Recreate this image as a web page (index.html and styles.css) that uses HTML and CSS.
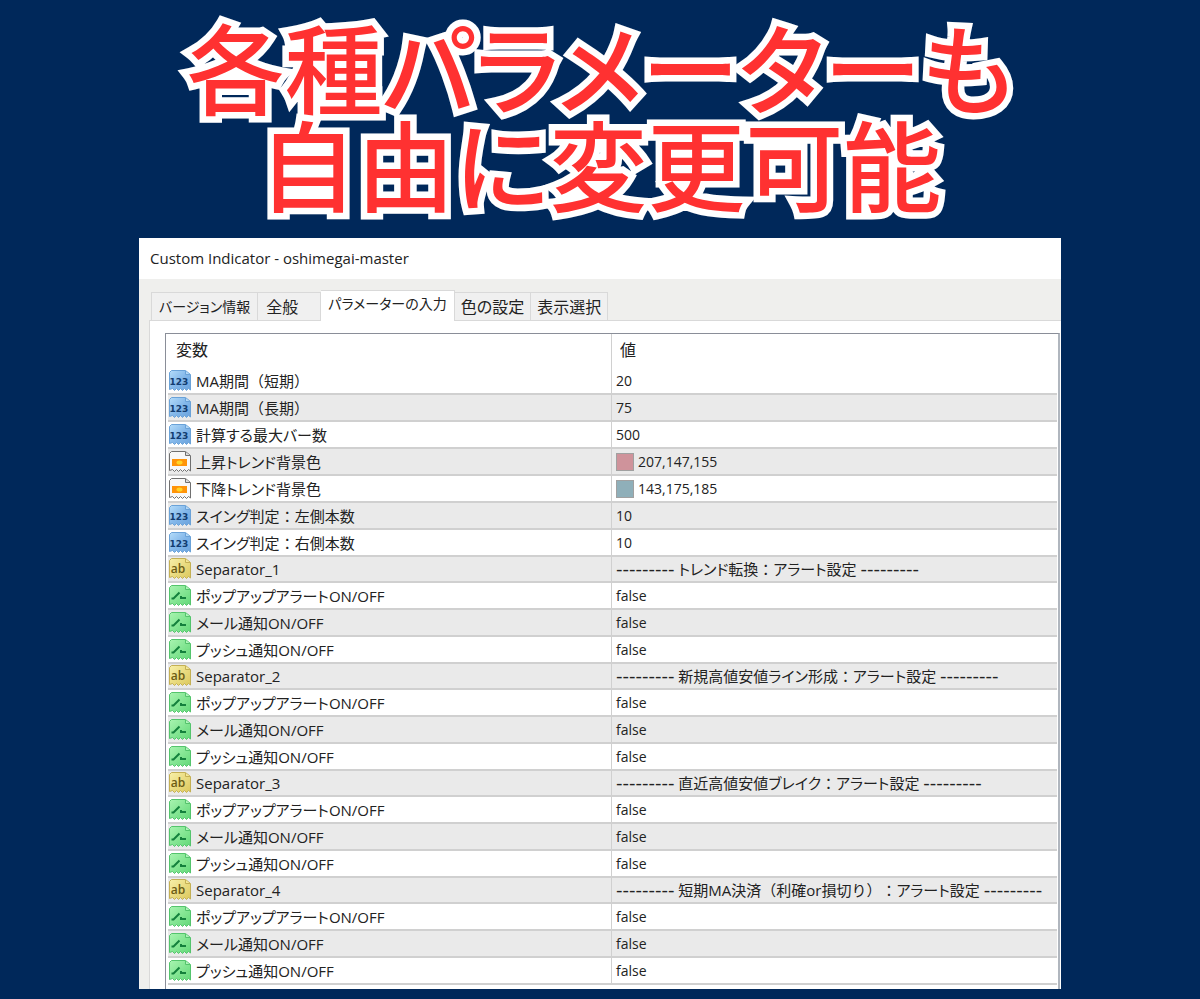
FILE: index.html
```html
<!DOCTYPE html>
<html lang="ja">
<head>
    <meta charset="UTF-8">
    <meta name="viewport" content="width=device-width, initial-scale=1.0">
    <title>各種パラメーターも自由に変更可能</title>
    <link rel="stylesheet" href="styles.css">
</head>
<body>

    <!-- Icon shapes used in the list -->
    <svg class="icon-defs" width="0" height="0" aria-hidden="true">
        <defs>
            <linearGradient id="blue" x1="0" y1="0" x2="1" y2="1">
                <stop offset="0" stop-color="#b4dcfa"/>
                <stop offset="0.5" stop-color="#84b8ea"/>
                <stop offset="1" stop-color="#6aa2dc"/>
            </linearGradient>
            <linearGradient id="yellow" x1="0" y1="0" x2="1" y2="1">
                <stop offset="0" stop-color="#f8f0a8"/>
                <stop offset="1" stop-color="#dcc85c"/>
            </linearGradient>
            <linearGradient id="green" x1="0" y1="0" x2="1" y2="1">
                <stop offset="0" stop-color="#a8f4b0"/>
                <stop offset="1" stop-color="#62d878"/>
            </linearGradient>
            <path id="sheet" d="M2.5 .5H16.5L21.5 4.5V20L19.5 18.5L17.5 20.5L15.5 18.5L13.5 20.5L11.5 18.5L9.5 20.5L7.5 18.5L5.5 20.5L3.5 18.5L.5 19.5V2.5Z"/>
            <symbol id="icon-int" viewBox="0 0 22 21">
                <use href="#sheet" fill="url(#blue)" stroke="#6aa2d8"/>
                <path d="M16.5 1V4.5H21" fill="#b4d8f6" stroke="#6aa2d8"/>
                <text x="10" y="15" text-anchor="middle" class="icon-num">123</text>
            </symbol>
            <symbol id="icon-color" viewBox="0 0 22 21">
                <use href="#sheet" fill="#f8f8f8" stroke="#707070"/>
                <path d="M16.5 1V4.5H21" fill="#ddd" stroke="#707070"/>
                <path d="M3 8H18V15H3Z" fill="#ff9408"/>
                <ellipse cx="10.5" cy="11.5" rx="3" ry="2" fill="#ffd428"/>
            </symbol>
            <symbol id="icon-str" viewBox="0 0 22 21">
                <use href="#sheet" fill="url(#yellow)" stroke="#c4b054"/>
                <path d="M16.5 1V4.5H21" fill="#f4e898" stroke="#c4b054"/>
                <text x="9" y="15" text-anchor="middle" class="icon-ab">ab</text>
            </symbol>
            <symbol id="icon-bool" viewBox="0 0 22 21">
                <use href="#sheet" fill="url(#green)" stroke="#54c46c"/>
                <path d="M16.5 1V4.5H21" fill="#b0f4ba" stroke="#54c46c"/>
                <path d="M2.5 13.5H4.5L10.5 7.5M12 11V13H17" fill="none" stroke="#14803c" stroke-width="2"/>
            </symbol>
        </defs>
    </svg>

    <h1>各種パラメーターも<br>自由に変更可能</h1>

    <div class="window">
        <div class="title-bar">Custom Indicator - oshimegai-master</div>

        <div class="tabs" role="tablist">
            <button class="tab tab-long" role="tab">バージョン情報</button>
            <button class="tab tab-general" role="tab">全般</button>
            <button class="tab tab-long active" role="tab" aria-selected="true">パラメーターの入力</button>
            <button class="tab" role="tab">色の設定</button>
            <button class="tab" role="tab">表示選択</button>
        </div>

        <div class="panel">
            <div class="list">
                <table>
                    <thead>
                        <tr><th class="col-name">変数</th><th>値</th></tr>
                    </thead>
                    <tbody>
                        <tr><td class="full"><svg class="icon"><use href="#icon-int"/></svg>MA期間（短期）</td><td>20</td></tr>
                        <tr><td class="full"><svg class="icon"><use href="#icon-int"/></svg>MA期間（長期）</td><td>75</td></tr>
                        <tr><td><svg class="icon"><use href="#icon-int"/></svg>計算する最大バー数</td><td>500</td></tr>
                        <tr><td><svg class="icon"><use href="#icon-color"/></svg>上昇トレンド背景色</td><td><span class="swatch swatch-up"></span>207,147,155</td></tr>
                        <tr><td><svg class="icon"><use href="#icon-color"/></svg>下降トレンド背景色</td><td><span class="swatch swatch-down"></span>143,175,185</td></tr>
                        <tr><td><svg class="icon"><use href="#icon-int"/></svg>スイング判定<span class="full">：</span>左側本数</td><td>10</td></tr>
                        <tr><td><svg class="icon"><use href="#icon-int"/></svg>スイング判定<span class="full">：</span>右側本数</td><td>10</td></tr>
                        <tr class="separator"><td><svg class="icon"><use href="#icon-str"/></svg>Separator_1</td><td><span class="dashes">---------</span> トレンド転換<span class="full">：</span>アラート設定 <span class="dashes">---------</span></td></tr>
                        <tr><td><svg class="icon"><use href="#icon-bool"/></svg>ポップアップアラートON/OFF</td><td>false</td></tr>
                        <tr><td><svg class="icon"><use href="#icon-bool"/></svg>メール通知ON/OFF</td><td>false</td></tr>
                        <tr><td><svg class="icon"><use href="#icon-bool"/></svg>プッシュ通知ON/OFF</td><td>false</td></tr>
                        <tr class="separator"><td><svg class="icon"><use href="#icon-str"/></svg>Separator_2</td><td><span class="dashes">---------</span> 新規高値安値ライン形成<span class="full">：</span>アラート設定 <span class="dashes">---------</span></td></tr>
                        <tr><td><svg class="icon"><use href="#icon-bool"/></svg>ポップアップアラートON/OFF</td><td>false</td></tr>
                        <tr><td><svg class="icon"><use href="#icon-bool"/></svg>メール通知ON/OFF</td><td>false</td></tr>
                        <tr><td><svg class="icon"><use href="#icon-bool"/></svg>プッシュ通知ON/OFF</td><td>false</td></tr>
                        <tr class="separator"><td><svg class="icon"><use href="#icon-str"/></svg>Separator_3</td><td><span class="dashes">---------</span> 直近高値安値ブレイク<span class="full">：</span>アラート設定 <span class="dashes">---------</span></td></tr>
                        <tr><td><svg class="icon"><use href="#icon-bool"/></svg>ポップアップアラートON/OFF</td><td>false</td></tr>
                        <tr><td><svg class="icon"><use href="#icon-bool"/></svg>メール通知ON/OFF</td><td>false</td></tr>
                        <tr><td><svg class="icon"><use href="#icon-bool"/></svg>プッシュ通知ON/OFF</td><td>false</td></tr>
                        <tr class="separator"><td><svg class="icon"><use href="#icon-str"/></svg>Separator_4</td><td><span class="dashes">---------</span> 短期MA決済<span class="full">（利確or損切り）：</span>アラート設定 <span class="dashes">---------</span></td></tr>
                        <tr><td><svg class="icon"><use href="#icon-bool"/></svg>ポップアップアラートON/OFF</td><td>false</td></tr>
                        <tr><td><svg class="icon"><use href="#icon-bool"/></svg>メール通知ON/OFF</td><td>false</td></tr>
                        <tr><td><svg class="icon"><use href="#icon-bool"/></svg>プッシュ通知ON/OFF</td><td>false</td></tr>
                    </tbody>
                </table>
            </div>
        </div>
    </div>

</body>
</html>
```
FILE: styles.css
```css
* {
    box-sizing: border-box;
}
body {
    margin: 0;
    padding: 16px 16px 10px;
    background-color: #00285a;
    color: #222;
    font-family: "Open Sans", "Noto Sans CJK JP", sans-serif;
    font-size: 15px;
    font-feature-settings: "palt";
}
.icon-defs {
    position: absolute;
}
h1 {
    margin: 0 0 28px;
    text-align: center;
    font-family: "Noto Sans CJK JP", sans-serif;
    font-size: 98px;
    font-weight: 500;
    line-height: 97px;
    color: #ff3131;
    -webkit-text-stroke: 13px #fff;
    paint-order: stroke fill;
}
.window {
    max-width: 922px;
    margin: 0 auto;
    background-color: #efefed;
}
.title-bar {
    height: 41px;
    padding: 0 11px;
    line-height: 41px;
    background-color: #fff;
}
.tabs {
    display: flex;
    align-items: flex-end;
    padding: 11px 12px 0;
}
.tab {
    height: 28px;
    margin: 0;
    padding: 0 6px 2px;
    border: 1px solid #d9d9d9;
    border-left-width: 0;
    border-bottom: none;
    background-color: #f0f0f0;
    color: #222;
    font: inherit;
    font-size: 16px;
    font-feature-settings: inherit;
    white-space: nowrap;
}
.tab:first-child {
    border-left-width: 1px;
}
.tab-long {
    padding: 0 7px 2px;
    font-size: 14px;
}
.tab-general {
    padding: 0 22px 2px 8px;
}
.tab.active {
    height: 31px;
    margin-bottom: -1px;
    padding-bottom: 6px;
    background-color: #fff;
    z-index: 1;
}
.panel {
    margin-left: 10px;
    padding: 12px 1px 0 15px;
    border: 1px solid #d9d9d9;
    border-right: none;
    border-bottom: none;
    background-color: #fff;
}
.list {
    padding: 0 1px 4px 2px;
    border: 1px solid #8a8e98;
    border-right: 2px solid #b0b6be;
    border-bottom: none;
}
table {
    width: 100%;
    table-layout: fixed;
    border-collapse: separate;
    border-spacing: 0;
}
th, td {
    height: 27px;
    padding: 0 4px;
    text-align: left;
    font-weight: normal;
    line-height: 24px;
    white-space: nowrap;
    overflow: hidden;
}
td {
    border-bottom: 2px solid #d0d0d0;
}
th {
    height: 34px;
    padding: 0 8px 2px;
    font-size: 16px;
}
.col-name {
    width: 443px;
}
td:first-child {
    padding-left: 1px;
}
td:last-child, th:last-child {
    border-left: 1px solid #d0d0d0;
}
td:last-child {
    font-size: 14px;
}
tbody tr:nth-child(even) {
    background-color: #eaeaea;
}
.separator td {
    height: 26px;
}
.separator td:last-child {
    font-size: 15px;
}
.full {
    font-feature-settings: normal;
    text-spacing-trim: space-all;
}
.dashes {
    font-family: "DejaVu Sans", sans-serif;
    font-size: 18px;
    line-height: 1;
}
.icon {
    width: 22px;
    height: 21px;
    margin: 1px 5px 0 0;
    vertical-align: top;
}
.icon-num {
    font: bold 9px "DejaVu Sans", sans-serif;
    fill: #123c70;
}
.icon-ab {
    font: 600 12px "Open Sans", sans-serif;
    fill: #6c5c14;
}
.swatch {
    display: inline-block;
    width: 18px;
    height: 18px;
    margin: 3px 4px 0 0;
    border: 1px solid #a0a0a0;
    vertical-align: top;
}
.swatch-up {
    background-color: #cf939b;
}
.swatch-down {
    background-color: #8fafb9;
}
```
